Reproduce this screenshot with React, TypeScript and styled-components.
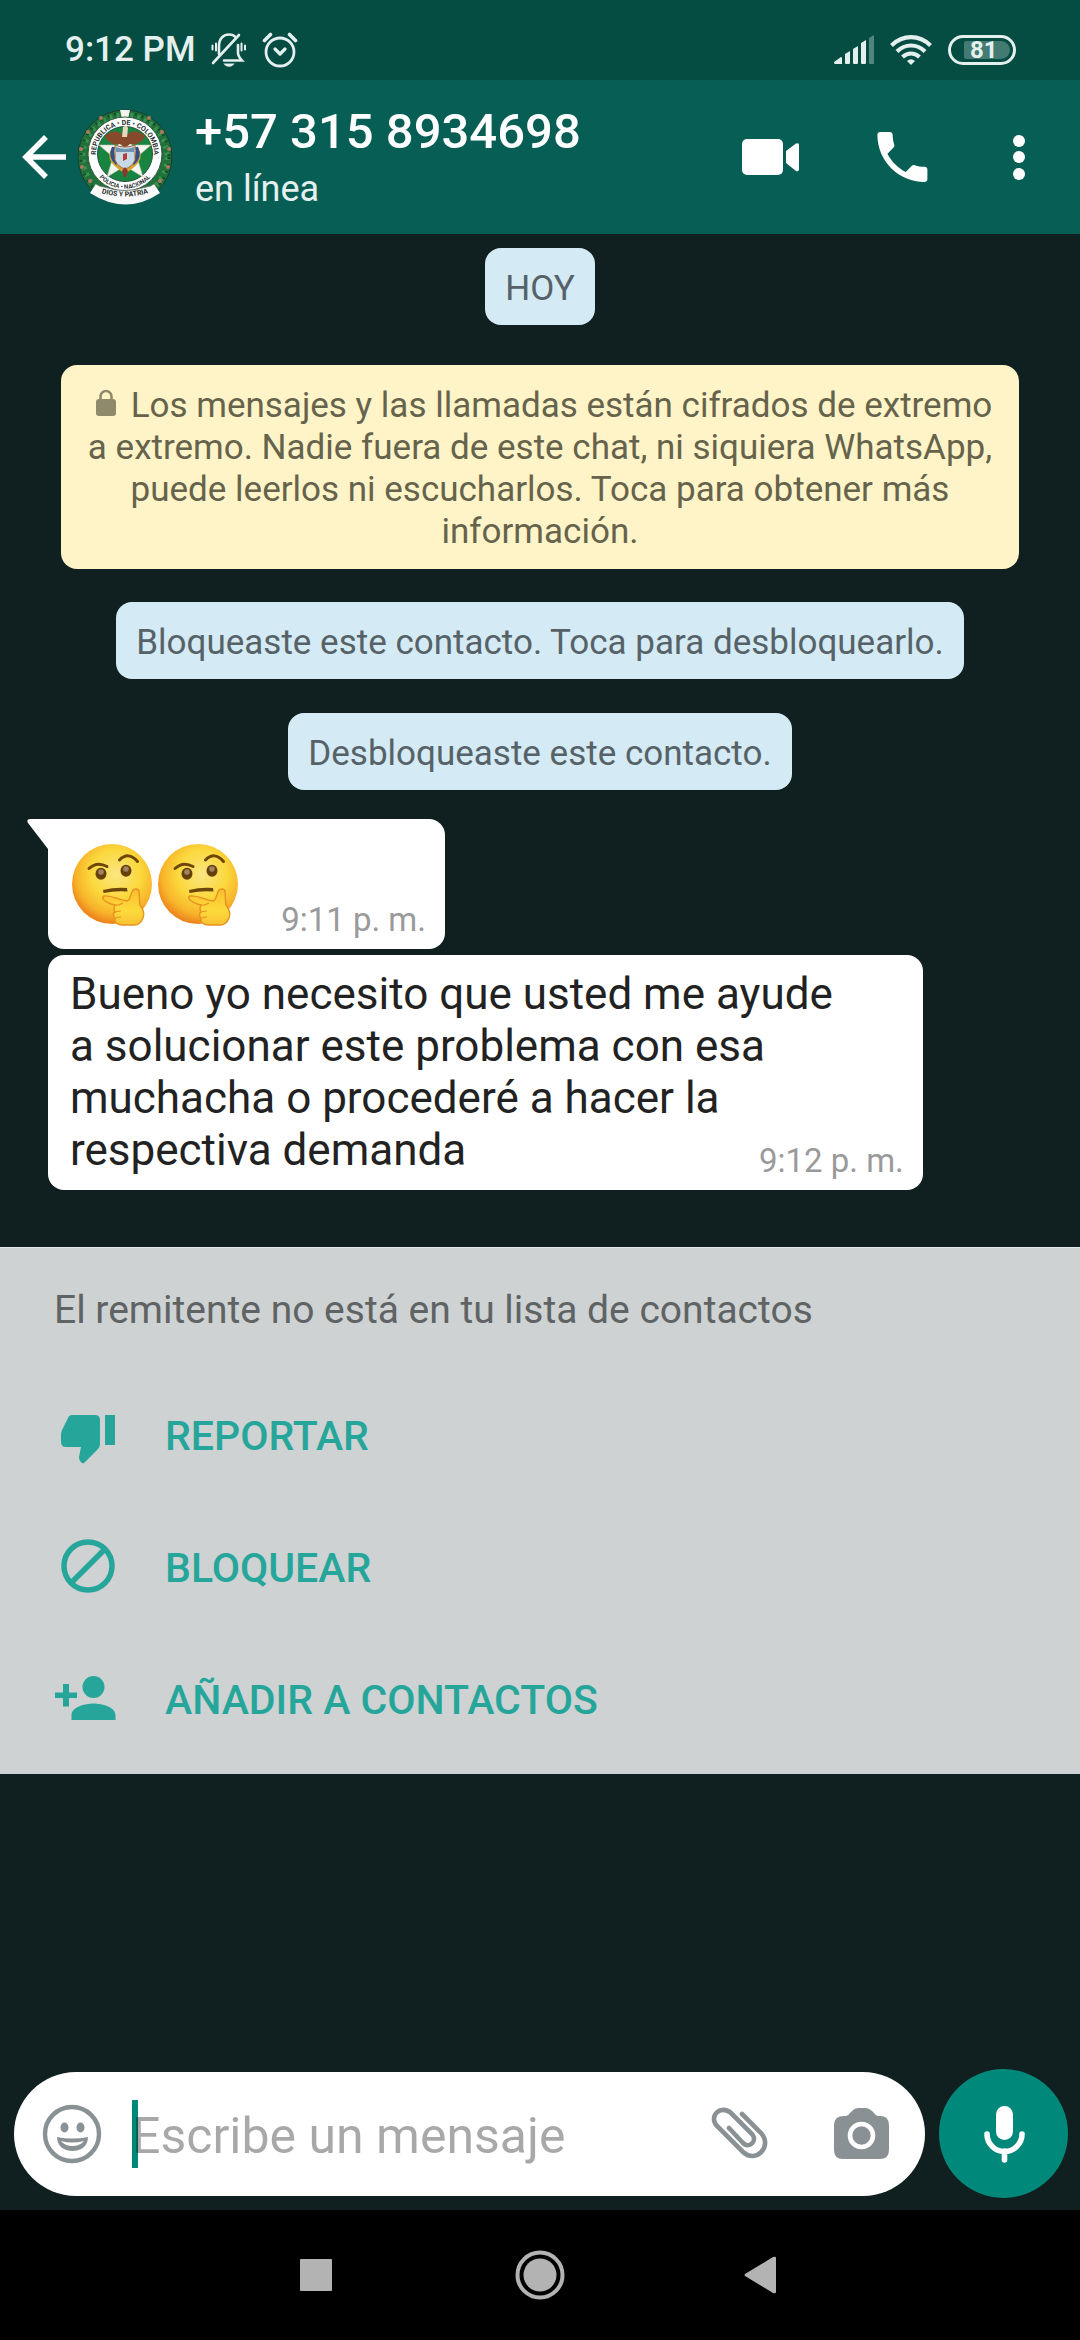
import React from 'react';
import styled, { createGlobalStyle } from 'styled-components';

const GlobalStyle = createGlobalStyle`
  *, *::before, *::after { box-sizing: border-box; }
  html, body, #root { height: 100%; }
  body { margin: 0; background: #101f1f; font-family: Roboto, "Noto Sans", sans-serif; }
  button { border: 0; padding: 0; margin: 0; background: none; font: inherit; color: inherit; cursor: pointer; }
  p { margin: 0; }
  svg { display: block; flex: none; }
`;

const Screen = styled.div`
  min-height: 100%;
  display: flex;
  flex-direction: column;
  background: #101f1f;
`;

const StatusBar = styled.div`
  height: 80px;
  padding: 20px 64px 0 65px;
  display: flex;
  justify-content: space-between;
  align-items: center;
  background: #054c43;
  color: #e3f0ee;
`;

const StatusGroup = styled.div<{ $gap: number }>`
  display: flex;
  align-items: center;
  gap: ${(p) => p.$gap}px;
`;

const Clock = styled.span`
  font-size: 35px;
  line-height: 40px;
  font-weight: 500;
`;

const Header = styled.header`
  height: 154px;
  padding: 0 44px 0 20px;
  display: flex;
  align-items: center;
  background: #075e54;
  color: #fff;
`;

const BackButton = styled.button`
  display: flex;
  align-items: center;
  gap: 9px;
`;

const Contact = styled.div`
  flex: 1;
  margin-left: 22px;
  padding-top: 4px;
`;

const Phone = styled.h1`
  margin: 0;
  font-size: 49px;
  line-height: 60px;
  font-weight: 500;
`;

const Presence = styled.p`
  font-size: 36px;
  line-height: 54px;
  color: #e6f0ef;
`;

const HeaderActions = styled.div`
  display: flex;
  align-items: center;
  gap: 76px;
`;

const Chat = styled.main`
  padding: 14px 0 57px;
  display: flex;
  flex-direction: column;
  align-items: center;
`;

const Notice = styled.p<{ $gap: number }>`
  margin-top: ${(p) => p.$gap}px;
  padding: 20px 20px 15px;
  border-radius: 16px;
  background: #d4eaf4;
  color: #566267;
  font-size: 35px;
  line-height: 42px;
  text-align: center;
`;

const Encryption = styled(Notice)`
  align-self: stretch;
  margin-left: 61px;
  margin-right: 61px;
  padding-bottom: 16px;
  background: #fff4c7;
  color: #66634c;
  svg { display: inline-block; margin-right: 7px; }
`;

const Bubble = styled.article<{ $gap: number; $tail?: boolean }>`
  position: relative;
  align-self: flex-start;
  display: grid;
  max-width: 81%;
  margin: ${(p) => p.$gap}px 0 0 48px;
  padding: 13px 19px 10px 22px;
  border-radius: ${(p) => (p.$tail ? '0 16px 16px 16px' : '16px')};
  background: #fff;
`;

const Tail = styled.svg`
  position: absolute;
  right: 100%;
  top: 0;
`;

const MessageText = styled.p`
  grid-area: 1 / 1;
  padding: 0 52px 4px 0;
  color: #222;
  font-size: 44px;
  line-height: 52px;
`;

const Emojis = styled.div`
  grid-area: 1 / 1;
  display: flex;
  padding: 11px 184px 12px 0;
`;

const Time = styled.time`
  grid-area: 1 / 1;
  align-self: end;
  justify-self: end;
  color: #9a9a9a;
  font-size: 33px;
  line-height: 39px;
`;

const SenderPanel = styled.section`
  padding: 39px 54px 8px;
  border-top: 1px solid #e4e7e7;
  background: #ced2d3;
`;

const SenderNote = styled.p`
  margin-bottom: 37px;
  font-size: 39px;
  line-height: 46px;
  color: #606364;
`;

const Action = styled.button`
  width: 100%;
  height: 132px;
  display: flex;
  align-items: center;
  gap: 47px;
  color: #26a69a;
  font-size: 41px;
  line-height: 48px;
  font-weight: 500;
  text-transform: uppercase;
`;

const Composer = styled.form`
  margin-top: auto;
  padding: 0 12px 12px 14px;
  display: flex;
  align-items: center;
  gap: 14px;
`;

const Field = styled.div`
  flex: 1;
  height: 124px;
  padding: 0 36px 0 28px;
  display: flex;
  align-items: center;
  border-radius: 62px;
  background: #fff;
  color: #8a9195;
`;

const InputWrap = styled.div`
  position: relative;
  flex: 1;
  height: 68px;
  margin-left: 30px;
  display: flex;
`;

const Caret = styled.span`
  position: absolute;
  left: 0;
  top: 0;
  width: 6px;
  height: 68px;
  background: #00897b;
`;

const Input = styled.input`
  position: relative;
  width: 100%;
  border: 0;
  padding: 4px 0 0;
  outline: 0;
  background: transparent;
  color: #222;
  font: 400 50px/60px Roboto, "Noto Sans", sans-serif;
  &::placeholder { color: rgba(0, 0, 0, 0.34); opacity: 1; }
`;

const FieldActions = styled.div`
  display: flex;
  align-items: center;
  gap: 65px;
`;

const MicButton = styled.button`
  width: 129px;
  height: 129px;
  display: grid;
  place-items: center;
  border-radius: 50%;
  background: #00897b;
  color: #fff;
`;

const NavBar = styled.nav`
  height: 130px;
  display: flex;
  justify-content: center;
  background: #000;
  color: #b3b3b3;
`;

const NavButton = styled.button`
  width: 222px;
  display: grid;
  place-items: center;
`;

const MutedBell = () => (
  <svg width="36" height="36" viewBox="0 0 36 36" fill="none" stroke="currentColor" strokeWidth="2.600" strokeLinecap="round">
    <path d="M8 22V14C8 6 13 2.500 18 2.500c3 0 5 .8 6.500 2.500M27 13v8q0 3 4 7.500H13" />
    <path d="M2 31 28 3" />
    <path d="M5 11.500v7M1.500 13.500v4M30.500 11.500v7M34 13.500v4" strokeWidth="2" />
    <path d="M12.500 31.500h11c-1 2-3 3.200-5.500 3.200s-4.500-1.200-5.500-3.200Z" fill="currentColor" stroke="none" />
  </svg>
);

const Alarm = () => (
  <svg width="36" height="36" viewBox="0 0 36 36" fill="none" stroke="currentColor" strokeWidth="2.800" strokeLinecap="round" strokeLinejoin="round">
    <circle cx="18" cy="20" r="14" />
    <path d="m13 17 5 5 5-5" strokeWidth="3.200" />
    <path d="M2.500 8.500 8.500 2.500M33.500 8.500 27.500 2.500" strokeWidth="3.600" />
  </svg>
);

const Signal = () => (
  <svg width="40" height="30" viewBox="0 0 40 30" fill="currentColor">
    <path d="M0 27 7 22q1 0 1 1v6H1q-1 0-1-2ZM11 19l5-3v12q0 1-1 1h-3q-1 0-1-1ZM19 14l5-3v17q0 1-1 1h-3q-1 0-1-1ZM27 8l5-3v23q0 1-1 1h-3q-1 0-1-1Z" />
    <path opacity=".35" d="m35 3 5-3v29h-4q-1 0-1-1Z" />
  </svg>
);

const Wifi = () => (
  <svg width="42" height="30" viewBox="0 0 42 30" fill="none" stroke="currentColor" strokeWidth="4.200">
    <path d="M1.500 10.500Q10 2.200 21 2.200t19.500 8.300" />
    <path d="M7 16.500Q13 10.500 21 10.500t14 6" />
    <path d="M12.500 22Q16.500 18.500 21 18.500t8.500 3.500" />
    <path d="M17 26q4-3.500 8 0l-4 4Z" fill="currentColor" stroke="none" />
  </svg>
);

const Battery = styled.div`
  width: 68px;
  height: 30px;
  padding: 3px;
  border: 3px solid currentColor;
  border-radius: 15px;
`;

const BatteryLevel = styled.div`
  width: 46px;
  height: 18px;
  margin-left: auto;
  padding-left: 6px;
  border-radius: 2px 9px 9px 2px;
  background: #437b72;
  font: 700 24px/18px Roboto, sans-serif;
`;

const BackArrow = () => (
  <svg width="48" height="48" viewBox="0 0 48 48" fill="none" stroke="currentColor" strokeWidth="5.500">
    <path d="M46 24H6M26 4 6 24l20 20" />
  </svg>
);

const Crest = () => (
  <svg width="96" height="96" viewBox="0 0 96 96">
    <defs>
      <path id="crest-top" d="M20.300 53.500A29 29 0 1 1 75.700 53.500" />
      <path id="crest-bottom" d="M14 50a34.300 34.300 0 0 0 68 0" />
      <path id="crest-motto" d="M21 83q27 9 54 0" />
    </defs>
    <circle cx="48" cy="48" r="47" fill="#20713a" stroke="#183e2b" strokeWidth="1" />
    <circle cx="48" cy="48" r="42" fill="none" stroke="#3a9150" strokeWidth="5" strokeDasharray="3 4" />
    <circle cx="48" cy="48" r="44" fill="none" stroke="#164d2a" strokeWidth="3" strokeDasharray="2 5" />
    <g fill="#b2785d">
      <circle cx="24" cy="9" r="2" /><circle cx="72" cy="9" r="2" />
      <circle cx="11" cy="23" r="2" /><circle cx="85" cy="23" r="2" />
      <circle cx="4" cy="40" r="2" /><circle cx="92" cy="40" r="2" />
      <circle cx="5" cy="58" r="2" /><circle cx="91" cy="58" r="2" />
      <circle cx="13" cy="72" r="2" /><circle cx="83" cy="72" r="2" />
    </g>
    <path d="M43 1h10l-2 9h-6Z" fill="#f5f5f0" />
    <circle cx="48" cy="45" r="37" fill="#fff" stroke="#365944" strokeWidth="1" />
    <circle cx="48" cy="45" r="27.500" fill="#178540" stroke="#25503a" strokeWidth="1" />
    <g fontFamily="Roboto, sans-serif" fontWeight="700" fill="#29312f">
      <text fontSize="7"><textPath href="#crest-top" startOffset="50%" textAnchor="middle">REPUBLICA • DE • COLOMBIA</textPath></text>
      <text fontSize="6"><textPath href="#crest-bottom" startOffset="50%" textAnchor="middle">POLICIA • NACIONAL</textPath></text>
    </g>
    <path d="m48 20 7 16h19L60 48l6 20-18-11-18 11 6-20-14-12h19Z" fill="#f3f4ed" stroke="#b5bda8" strokeWidth=".6" />
    <path d="M48 28c-5-8-15-6-20-1 3 8 10 9 15 8l5 4 5-4c5 1 12 0 15-8-5-5-15-7-20 1Z" fill="#87492c" />
    <path d="M46 18q4-3 5 1l-1 9h-5Z" fill="#e5d6bd" />
    <path d="M36 37q-9 12 4 22l8 6 8-6q13-10 4-22l-4 18-8 5-8-5Z" fill="#d5a52f" />
    <path d="M35 38q-5 10 4 18l3-3q-7-6-4-15ZM61 38q5 10-4 18l-3-3q7-6 4-15Z" fill="#384d8b" />
    <path d="M38 36q10 4 20 0v15q-3 7-10 9-7-2-10-9Z" fill="#c8d9e6" stroke="#9b6a31" strokeWidth="1" />
    <path d="M39 38q9 4 18 0v5H39Z" fill="#6e95b4" />
    <path d="m46 45 4-1v6l-4 2Z" fill="#b53e39" />
    <path d="m48 58 3 4-2 6h-2l-2-6Z" fill="#8a3531" />
    <path d="M19 75q4 3 8 3 21 7 42 0 4 0 8-3l6 9Q49 107 13 84Z" fill="#fafafa" />
    <path d="M19 75q4 3 8 3 21 7 42 0 4 0 8-3" fill="none" stroke="#637169" strokeWidth=".8" />
    <text fontSize="7" fontFamily="Roboto, sans-serif" fontWeight="700" fill="#29312f">
      <textPath href="#crest-motto" startOffset="50%" textAnchor="middle">DIOS Y PATRIA</textPath>
    </text>
  </svg>
);

const Video = () => (
  <svg width="58" height="36" viewBox="0 0 58 36" fill="currentColor">
    <rect width="41" height="36" rx="5" />
    <path d="M44 12 54 4.500q3-1 3 1.500v24q0 3-3 2L44 24Z" />
  </svg>
);

const Call = () => (
  <svg width="50" height="50" viewBox="2.500 3 18 18" fill="currentColor">
    <path d="M6.620 10.790c1.440 2.830 3.760 5.140 6.590 6.590l2.200-2.200c.27-.27.67-.36 1.020-.24 1.120.37 2.330.57 3.570.57.550 0 1 .45 1 1V20c0 .55-.45 1-1 1C10.610 21 3 13.390 3 4c0-.55.450-1 1-1h3.500c.55 0 1 .45 1 1 0 1.250.2 2.450.57 3.570.11.35.03.74-.25 1.020l-2.200 2.200Z" />
  </svg>
);

const CallButton = styled.button`
  svg { overflow: visible; }
`;

const Dots = () => (
  <svg width="34" height="50" viewBox="0 0 34 50" fill="currentColor">
    <circle cx="17" cy="9" r="6" /><circle cx="17" cy="25" r="6" /><circle cx="17" cy="42" r="6" />
  </svg>
);

const Lock = () => (
  <svg width="36" height="28" viewBox="0 0 36 28" fill="#8f8a6c">
    <rect x="8" y="10" width="20" height="17" rx="3" />
    <path d="M12.500 12V7.500a5.500 5.500 0 0 1 11 0V12" fill="none" stroke="#8f8a6c" strokeWidth="2.600" />
  </svg>
);

const ThinkingDefs = () => (
  <svg width="0" height="0" aria-hidden="true">
    <defs>
      <radialGradient id="face" cx="55%" cy="38%" r="62%">
        <stop offset="0" stopColor="#fbe682" />
        <stop offset=".5" stopColor="#fbd83c" />
        <stop offset=".8" stopColor="#f8b42a" />
        <stop offset="1" stopColor="#ec831c" />
      </radialGradient>
      <linearGradient id="hand" x1="0" y1="0" x2="0" y2="1">
        <stop offset="0" stopColor="#fbbd2e" />
        <stop offset=".6" stopColor="#fcdb3c" />
        <stop offset="1" stopColor="#f8c132" />
      </linearGradient>
    </defs>
  </svg>
);

const Thinking = () => (
  <svg width="86" height="84" viewBox="0 0 86 84" role="img" aria-label="Cara pensativa">
    <circle cx="42" cy="41" r="40" fill="url(#face)" />
    <path d="M19 25.500q8-7.500 18-2M49.500 17q9-9 18 1.500" fill="none" stroke="#6e4607" strokeWidth="3" strokeLinecap="round" />
    <ellipse cx="31" cy="30.700" rx="5.500" ry="6" fill="#664009" />
    <ellipse cx="56" cy="27.700" rx="5.500" ry="6" fill="#664009" />
    <circle cx="31" cy="29" r="2.800" fill="#a08462" /><circle cx="56" cy="26" r="2.800" fill="#a08462" />
    <path d="M33 47q12-3 24-2l.5 3.500q-12-1-24 1.500Z" fill="#6e4607" />
    <path d="M34 53c7-1 15 4 23 5 3 0 3-5 5-9 1-4 7-4 7 0 1 5 0 9 1 13 3 4 5 8 3 13-2 5-5 7-9 7H53c-6 0-9-3-8-7-2-2-2-5 0-6-2-3-1-5 0-7-5-1-11-4-12-6q-1-2 1-3Z" fill="url(#hand)" stroke="#e8921f" strokeWidth="1.400" />
    <path d="M45 62q3 1 8-2M45 69q3-1 6-1M46 75q2-1 5-1" fill="none" stroke="#e8921f" strokeWidth="1.200" />
  </svg>
);

const ThumbDown = () => (
  <svg width="64" height="66" viewBox="0 0 64 66" fill="currentColor">
    <path d="M18 12h23q5 0 5 5v24q0 3-2 5L30 60q-2 1-4-2-1-2-1-4l2-10H12q-5 0-5-5v-7q0-2 1-5l6-12q1-3 4-3ZM51 12h10v30H51Z" />
  </svg>
);

const Block = () => (
  <svg width="64" height="66" viewBox="0 0 64 66" fill="none" stroke="currentColor" strokeWidth="5.500">
    <circle cx="34" cy="31" r="24" /><path d="m17 48 34-34" />
  </svg>
);

const AddPerson = () => (
  <svg width="64" height="66" viewBox="0 0 64 66" fill="currentColor">
    <circle cx="39.500" cy="20" r="11" />
    <path d="M17.500 53v-5c0-8 14-11.500 22-11.500s22 3.500 22 11.500v5ZM9 17h6v8.500h8v5.500h-8v8.500H9V31H1v-5.500h8Z" />
  </svg>
);

const Smile = () => (
  <svg width="60" height="60" viewBox="0 0 60 60" fill="currentColor">
    <circle cx="30" cy="30" r="27" fill="none" stroke="currentColor" strokeWidth="4.400" />
    <ellipse cx="22.500" cy="23.500" rx="4" ry="5" /><ellipse cx="38.500" cy="23.500" rx="4" ry="5" />
    <path d="M15 33q15 3 31 0c0 9-7 14-15.500 14S15 42 15 33Z" />
    <path d="M19 37q11 3 23 0-4 5-11.500 5T19 37Z" fill="#fff" />
  </svg>
);

const Clip = () => (
  <svg width="58" height="54" viewBox="0 0 58 54" fill="none" stroke="currentColor" strokeWidth="4.600" strokeLinecap="round">
    <path d="m31 7 19 19c12 13-5 31-18 19L6 19C-3 9 10-3 20 6l21 21c6 7-3 15-9 9L18 21" />
  </svg>
);

const Camera = () => (
  <svg width="55" height="58" viewBox="0 0 55 58" fill="currentColor">
    <path d="M10 11h2q2 0 4-3l2-2q3-3 6-3h8q3 0 6 3l2 2q2 3 4 3h2q9 0 9 9v25q0 9-9 9H9q-9 0-9-9V20q0-9 10-9Z" />
    <circle cx="27.500" cy="30.500" r="11.500" fill="none" stroke="#fff" strokeWidth="4.600" />
  </svg>
);

const Mic = () => (
  <svg width="42" height="58" viewBox="0 0 42 58" fill="none" stroke="currentColor" strokeWidth="5.600" strokeLinecap="round">
    <rect x="13" y="1" width="17" height="34" rx="8.500" fill="currentColor" stroke="none" />
    <path d="M4 29a17.500 17.500 0 0 0 35 0M21.500 46v9" />
  </svg>
);

const actions = [
  { label: 'Reportar', icon: <ThumbDown /> },
  { label: 'Bloquear', icon: <Block /> },
  { label: 'Añadir a contactos', icon: <AddPerson /> },
];

export default function App() {
  return (
    <Screen>
      <GlobalStyle />
      <StatusBar>
        <StatusGroup $gap={15}>
          <Clock>9:12 PM</Clock>
          <MutedBell />
          <Alarm />
        </StatusGroup>
        <StatusGroup $gap={16}>
          <Signal />
          <Wifi />
          <Battery><BatteryLevel>81</BatteryLevel></Battery>
        </StatusGroup>
      </StatusBar>
      <Header>
        <BackButton aria-label="Atrás"><BackArrow /><Crest /></BackButton>
        <Contact>
          <Phone>+57 315 8934698</Phone>
          <Presence>en línea</Presence>
        </Contact>
        <HeaderActions>
          <button aria-label="Videollamada"><Video /></button>
          <CallButton aria-label="Llamar"><Call /></CallButton>
          <button aria-label="Más opciones"><Dots /></button>
        </HeaderActions>
      </Header>
      <Chat>
        <Notice $gap={0}>HOY</Notice>
        <Encryption $gap={40}>
          <Lock />
          Los mensajes y las llamadas están cifrados de extremo a extremo. Nadie fuera de este chat, ni siquiera
          WhatsApp, puede leerlos ni escucharlos. Toca para obtener más información.
        </Encryption>
        <Notice $gap={33}>Bloqueaste este contacto. Toca para desbloquearlo.</Notice>
        <Notice $gap={34}>Desbloqueaste este contacto.</Notice>
        <Bubble $gap={29} $tail>
          <Tail width="21" height="30" viewBox="0 0 21 30" fill="#fff"><path d="M21 0v30L1 4Q-1 0 3 0Z" /></Tail>
          <ThinkingDefs />
          <Emojis><Thinking /><Thinking /></Emojis>
          <Time>9:11 p. m.</Time>
        </Bubble>
        <Bubble $gap={6}>
          <MessageText>
            Bueno yo necesito que usted me ayude a solucionar este problema con esa muchacha o procederé a hacer la
            respectiva demanda
          </MessageText>
          <Time>9:12 p. m.</Time>
        </Bubble>
      </Chat>
      <SenderPanel>
        <SenderNote>El remitente no está en tu lista de contactos</SenderNote>
        {actions.map((a) => (
          <Action key={a.label}>{a.icon}{a.label}</Action>
        ))}
      </SenderPanel>
      <Composer onSubmit={(e) => e.preventDefault()}>
        <Field>
          <button type="button" aria-label="Emojis"><Smile /></button>
          <InputWrap>
            <Caret />
            <Input aria-label="Mensaje" placeholder="Escribe un mensaje" />
          </InputWrap>
          <FieldActions>
            <button type="button" aria-label="Adjuntar"><Clip /></button>
            <button type="button" aria-label="Cámara"><Camera /></button>
          </FieldActions>
        </Field>
        <MicButton type="button" aria-label="Mensaje de voz"><Mic /></MicButton>
      </Composer>
      <NavBar>
        <NavButton aria-label="Recientes">
          <svg width="36" height="36" viewBox="0 0 36 36" fill="currentColor"><rect y="2" width="32" height="32" rx="1" /></svg>
        </NavButton>
        <NavButton aria-label="Inicio">
          <svg width="50" height="50" viewBox="0 0 50 50" fill="currentColor">
            <circle cx="25" cy="25" r="22.500" fill="none" stroke="currentColor" strokeWidth="4" /><circle cx="25" cy="25" r="16.500" />
          </svg>
        </NavButton>
        <NavButton aria-label="Volver">
          <svg width="36" height="38" viewBox="0 0 36 38" fill="currentColor"><path d="M1 18 29 1q3-1 3 1v34q0 2-3 1L1 20q-1-1 0-2Z" /></svg>
        </NavButton>
      </NavBar>
    </Screen>
  );
}
